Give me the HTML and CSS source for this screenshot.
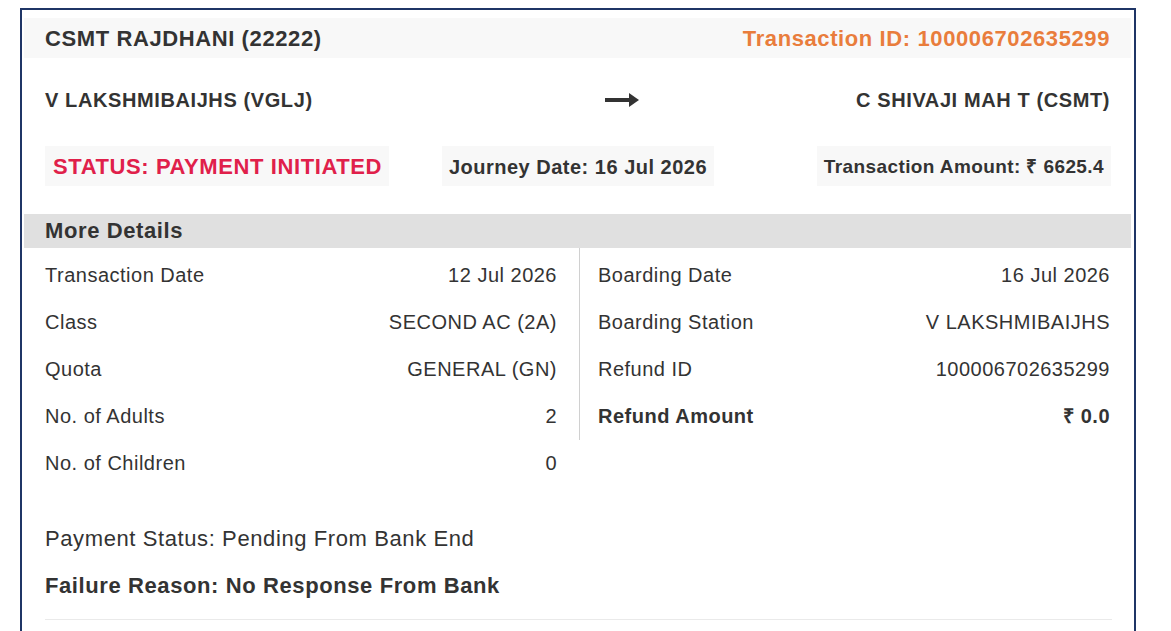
FILE: index.html
```html
<!DOCTYPE html>
<html lang="en">
<head>
    <meta charset="UTF-8">
    <meta name="viewport" content="width=device-width, initial-scale=1.0">
    <title>Transaction History</title>
    <link rel="stylesheet" href="styles.css">
</head>
<body>
    <div class="txn-card">
        <div class="txn-header">
            <span class="train-name">CSMT RAJDHANI (22222)</span>
            <span class="txn-id">Transaction ID: 100006702635299</span>
        </div>

        <div class="route">
            <span class="station">V LAKSHMIBAIJHS (VGLJ)</span>
            <svg class="arrow" width="34" height="14" viewBox="0 0 34 14">
                <rect x="0" y="5" width="25" height="4" fill="#333"/>
                <polygon points="24,0 34,7 24,14" fill="#333"/>
            </svg>
            <span class="station station-to">C SHIVAJI MAH T (CSMT)</span>
        </div>

        <div class="summary">
            <div class="pill status">STATUS: PAYMENT INITIATED</div>
            <div class="pill journey">Journey Date: 16 Jul 2026</div>
            <div class="pill amount">Transaction Amount: ₹ 6625.4</div>
        </div>

        <div class="section-title">More Details</div>

        <div class="details">
            <div class="col col-left">
                <div class="row"><span>Transaction Date</span><span>12 Jul 2026</span></div>
                <div class="row"><span>Class</span><span>SECOND AC (2A)</span></div>
                <div class="row"><span>Quota</span><span>GENERAL (GN)</span></div>
                <div class="row"><span>No. of Adults</span><span>2</span></div>
                <div class="row"><span>No. of Children</span><span>0</span></div>
            </div>
            <div class="col col-right">
                <div class="row"><span>Boarding Date</span><span>16 Jul 2026</span></div>
                <div class="row"><span>Boarding Station</span><span>V LAKSHMIBAIJHS</span></div>
                <div class="row"><span>Refund ID</span><span>100006702635299</span></div>
                <div class="row bold"><span>Refund Amount</span><span>₹ 0.0</span></div>
            </div>
        </div>

        <div class="payment">
            <div class="line">Payment Status: Pending From Bank End</div>
            <div class="line bold">Failure Reason: No Response From Bank</div>
        </div>
    </div>
</body>
</html>
```

FILE: styles.css
```css
body {
    margin: 8px 0 0 0;
    background: #fff;
    font-family: "Liberation Sans", Arial, sans-serif;
    color: #333;
    letter-spacing: 0.5px;
}
.txn-card {
    box-sizing: border-box;
    width: 1116px;
    margin-left: 20px;
    border: 2px solid #1f3566;
    padding: 8px 0 40px 0;
}
.txn-header {
    box-sizing: border-box;
    display: flex;
    justify-content: space-between;
    align-items: center;
    height: 40px;
    margin: 0 3px 0 2px;
    padding: 1px 21px 0 21px;
    background: #f8f8f8;
    font-size: 22px;
    font-weight: bold;
    letter-spacing: 0.6px;
}
.txn-id {
    color: #e97d3c;
}
.route {
    display: grid;
    grid-template-columns: 560px 34px 1fr;
    align-items: center;
    padding: 28px 24px 0 23px;
    line-height: 28px;
    font-size: 20px;
    font-weight: bold;
    letter-spacing: 0.6px;
}
.station-to {
    text-align: right;
}
.arrow {
    display: block;
}
.summary {
    display: grid;
    grid-template-columns: 1fr auto 1fr;
    align-items: center;
    margin-top: 32px;
    padding: 0 23px 0 23px;
}
.pill {
    background: #f8f8f8;
    padding: 9px 7px 7px 7px;
    line-height: 24px;
    font-weight: bold;
}
.status {
    justify-self: start;
    padding-left: 8px;
    color: #e0204a;
    font-size: 22px;
    letter-spacing: 0.6px;
}
.journey {
    justify-self: center;
    font-size: 20px;
}
.amount {
    justify-self: end;
    font-size: 19px;
    letter-spacing: 0.4px;
}
.section-title {
    margin: 28px 3px 0 2px;
    padding: 0 21px;
    height: 34px;
    line-height: 34px;
    background: #e0e0e0;
    font-size: 22px;
    font-weight: bold;
    letter-spacing: 0.6px;
}
.details {
    display: grid;
    grid-template-columns: 534px 1fr;
    align-items: start;
    padding: 0 24px 0 23px;
}
.col {
    padding-top: 4px;
}
.col-left {
    padding-right: 22px;
}
.col-right {
    border-left: 1px solid #d0d0d0;
    padding-bottom: 0;
    padding-left: 18px;
}
.row {
    display: flex;
    justify-content: space-between;
    height: 47px;
    line-height: 47px;
    font-size: 20px;
}
.bold {
    font-weight: bold;
}
.payment {
    margin: 28px 22px 0 23px;
    padding-bottom: 10px;
    border-bottom: 1px solid #eaeaea;
}
.line {
    height: 47px;
    line-height: 47px;
    font-size: 22px;
    letter-spacing: 0.6px;
}
```
